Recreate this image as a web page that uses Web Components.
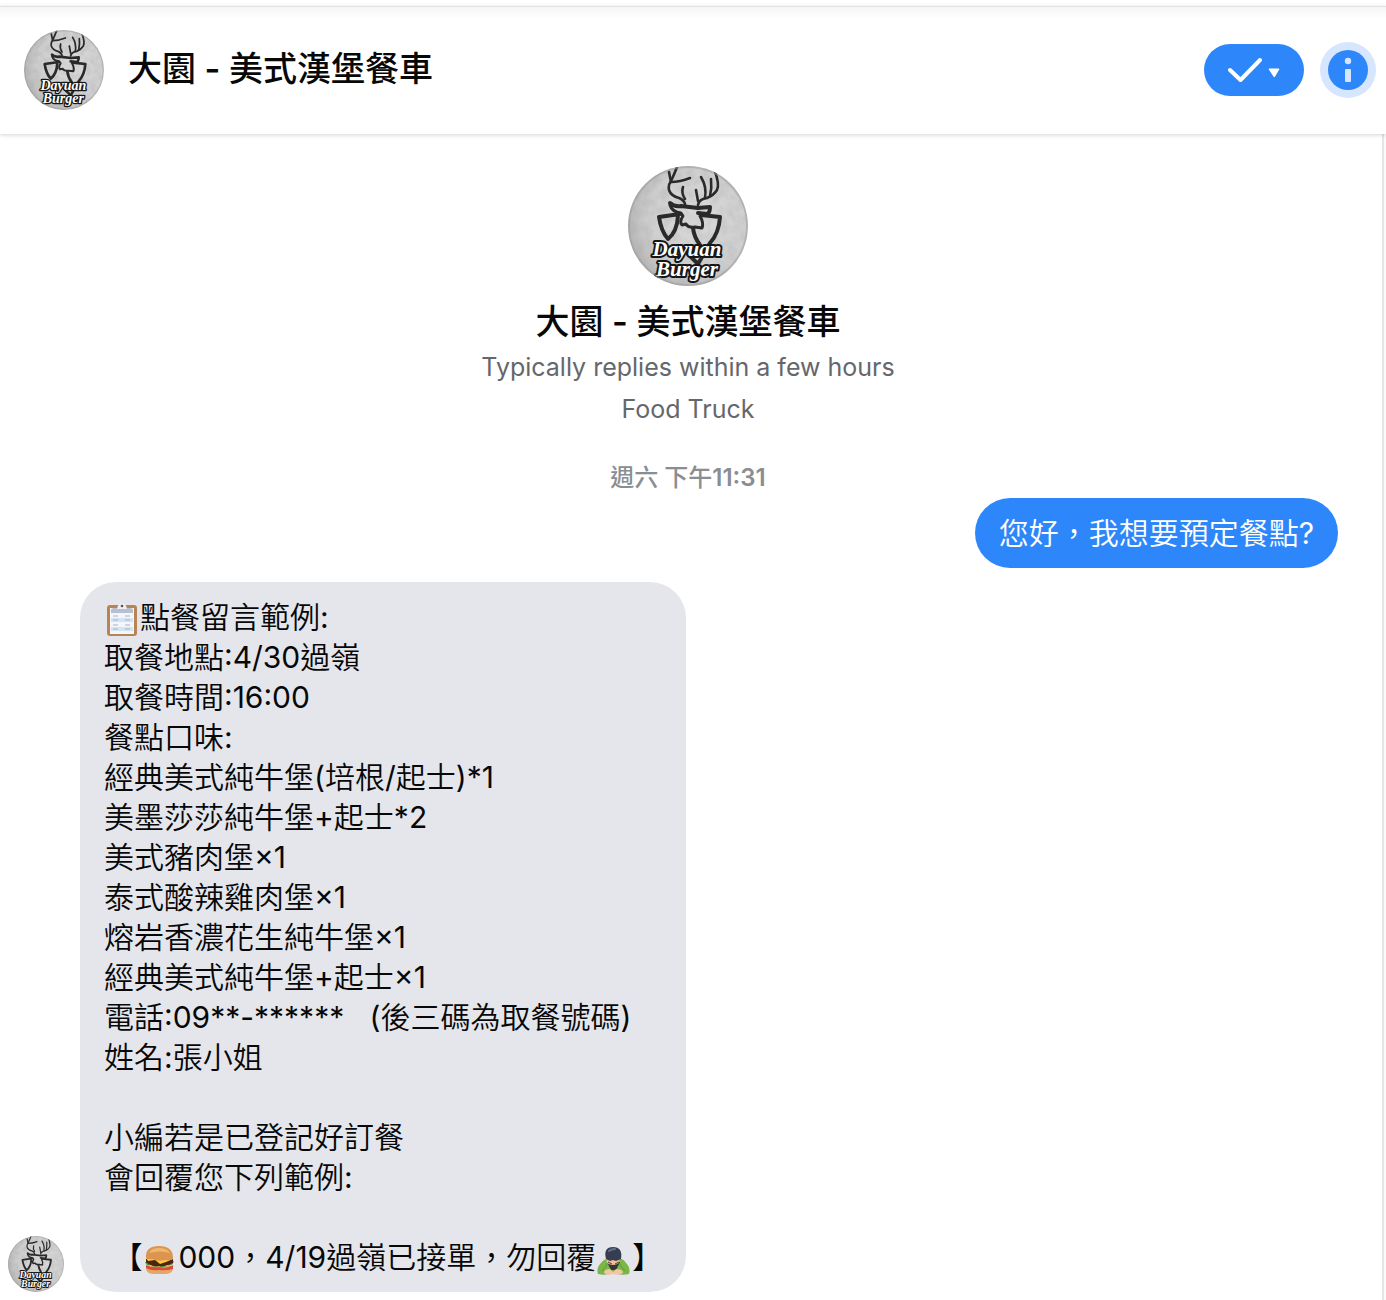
<!DOCTYPE html>
<html lang="zh-Hant">
<head>
<meta charset="utf-8">
<meta name="viewport" content="width=device-width, initial-scale=1">
<title>大園 - 美式漢堡餐車</title>
<style>
  body {
    margin: 0;
    color: #080809;
    background: #fff;
    font-family: Inter, "Noto Sans CJK TC", sans-serif;
  }
</style>
</head>
<body>
<chat-page>
  <chat-header slot="header" name="大園 - 美式漢堡餐車"></chat-header>
  <page-intro name="大園 - 美式漢堡餐車" reply="Typically replies within a few hours" category="Food Truck"></page-intro>
  <chat-time>週六 下午11:31</chat-time>
  <chat-message from="me">您好，我想要預定餐點?</chat-message>
  <chat-message from="page"><emoji-icon name="clipboard"></emoji-icon>點餐留言範例:
取餐地點:4/30過嶺
取餐時間:16:00
餐點口味:
經典美式純牛堡(培根/起士)*1
美墨莎莎純牛堡+起士*2
美式豬肉堡×1
泰式酸辣雞肉堡×1
熔岩香濃花生純牛堡×1
經典美式純牛堡+起士×1
電話:09**-******   (後三碼為取餐號碼)
姓名:張小姐

小編若是已登記好訂餐
會回覆您下列範例:

 【<emoji-icon name="burger"></emoji-icon>000，4/19過嶺已接單，勿回覆<emoji-icon name="bow"></emoji-icon>】</chat-message>
</chat-page>

<script>
class BurgerLogo extends HTMLElement {
  constructor() {
    super()
    const shadow = this.attachShadow({mode: 'open'})
    shadow.innerHTML = `
      <style>
        :host {
          display: block;
          flex: none;
          width: var(--logo-size, 80px);
          height: var(--logo-size, 80px);
        }
        svg {
          display: block;
          width: 100%;
          height: 100%;
          border-radius: 50%;
        }
        text {
          font: italic bold 21px "Liberation Serif", serif;
          fill: #fff;
          stroke: #161616;
          stroke-width: 4px;
          stroke-linejoin: round;
          paint-order: stroke;
          text-anchor: middle;
        }
      </style>
      <svg viewBox="0 0 120 120" role="img" aria-label="Dayuan Burger">
        <defs>
          <radialGradient id="paper" cx="60%" cy="45%" r="62%">
            <stop offset="0" stop-color="#dadada"/>
            <stop offset=".7" stop-color="#cecece"/>
            <stop offset="1" stop-color="#b4b4b4"/>
          </radialGradient>
          <filter id="grain" x="0" y="0" width="100%" height="100%">
            <feTurbulence type="fractalNoise" baseFrequency=".12" numOctaves="3" seed="4"/>
            <feColorMatrix values="0 0 0 0 .35  0 0 0 0 .35  0 0 0 0 .35  1 0 0 0 -.35"/>
          </filter>
        </defs>
        <rect width="120" height="120" fill="url(#paper)"/>
        <rect width="120" height="120" filter="url(#grain)" opacity=".5"/>
        <g fill="none" stroke="#2a2a2a" stroke-linecap="round" stroke-linejoin="round">
          <g stroke-width="2.600">
            <path d="M49 1Q46 9 43 15Q40 19 41 24Q43 30 51 32Q56 34 57 38"/>
            <path d="M41 6L43 16Q52 16 62 12"/>
            <path d="M55 21Q53 27 57 33"/>
            <path d="M86 3Q92 18 89 24Q86 29 79 32Q71 33 70 39"/>
            <path d="M73 11Q79 21 77 32M83 13Q84 22 82 30M68 24L70 35"/>
          </g>
          <path stroke-width="4" d="M42 37Q46 41 53 40L70 42L82 41Q82 47 79 48L70 47"/>
          <path stroke-width="3" d="M42 39Q44 46 53 47L55 50Q51 56 54 59L58 58Q60 62 67 61L74 62Q76 57 72 50"/>
          <path stroke-width="4" d="M52 48L31 51Q33 65 40 73Q49 66 50 50M73 49L92 51Q91 67 82 77L70 98L58 86M65 62Q66 71 72 79"/>
        </g>
        <text x="59" y="90">Dayuan</text>
        <text x="59" y="110">Burger</text>
        <circle cx="60" cy="60" r="59" fill="none" stroke="#999" stroke-opacity=".5" stroke-width="2"/>
      </svg>
    `
  }
}

class ChatHeader extends HTMLElement {
  constructor() {
    super()
    const shadow = this.attachShadow({mode: 'open'})
    shadow.innerHTML = `
      <style>
        :host {
          display: block;
          padding-top: 6px;
        }
        header {
          display: flex;
          align-items: center;
          box-sizing: border-box;
          height: 128px;
          padding: 0 10px 0 24px;
          border-top: 1px solid #e2e2e2;
          border-bottom: 1px solid #fff;
          background: linear-gradient(#f5f5f5, #fff 12px);
          box-shadow: 0 1px 4px 0 rgba(0,0,0,0.18);
        }
        h1 {
          flex: 1;
          margin: 0 24px;
          padding-bottom: 2px;
          font-size: 34px;
          font-weight: 600;
          line-height: 44px;
          font-family: Inter, "Noto Sans CJK TC Medium", "Noto Sans CJK TC", sans-serif;
          font-synthesis: none;
        }
        button {
          display: flex;
          align-items: center;
          justify-content: center;
          padding: 0;
          border: 0;
          color: #fff;
          background: #2e86fb;
          cursor: pointer;
        }
        .done {
          width: 100px;
          height: 52px;
          border-radius: 26px;
        }
        .info {
          width: 56px;
          height: 56px;
          margin-left: 16px;
          border-radius: 50%;
          background: #d6e6fe;
        }
      </style>
      <header>
        <burger-logo></burger-logo>
        <h1>${this.getAttribute('name')}</h1>
        <button class="done" type="button" aria-label="Mark as done">
          <svg width="100" height="52" viewBox="0 0 100 52">
            <path d="M26 26L36.500 36L56 16" fill="none" stroke="#fff" stroke-width="4" stroke-linecap="round" stroke-linejoin="round"/>
            <path d="M65 25H75L70.300 33Z" fill="#fff" stroke="#fff" stroke-linejoin="round"/>
          </svg>
        </button>
        <button class="info" type="button" aria-label="Page information">
          <svg width="40" height="40" viewBox="0 0 40 40">
            <circle cx="20" cy="20" r="20" fill="#2e86fb"/>
            <circle cx="20" cy="11" r="3.200" fill="#d6e6fe"/>
            <rect x="17" y="19" width="6" height="13" rx="1" fill="#d6e6fe"/>
          </svg>
        </button>
      </header>
    `
  }
}

class PageIntro extends HTMLElement {
  constructor() {
    super()
    const shadow = this.attachShadow({mode: 'open'})
    shadow.innerHTML = `
      <style>
        :host {
          display: flex;
          flex-direction: column;
          align-items: center;
          text-align: center;
          --logo-size: 120px;
        }
        h2 {
          margin: 14px 0 2px;
          font-size: 34px;
          font-weight: 600;
          line-height: 44px;
          font-family: Inter, "Noto Sans CJK TC Medium", "Noto Sans CJK TC", sans-serif;
          font-synthesis: none;
        }
        p {
          margin: 0;
          color: #65676b;
          font-size: 25px;
          line-height: 42px;
        }
      </style>
      <burger-logo></burger-logo>
      <h2>${this.getAttribute('name')}</h2>
      <p>${this.getAttribute('reply')}</p>
      <p>${this.getAttribute('category')}</p>
    `
  }
}

class ChatTime extends HTMLElement {
  constructor() {
    super()
    const shadow = this.attachShadow({mode: 'open'})
    shadow.innerHTML = `
      <style>
        :host {
          display: block;
          padding: 32px 0 4px;
          color: #8a8d91;
          font-size: 24px;
          font-weight: 600;
          line-height: 32px;
          text-align: center;
          font-family: Inter, "Noto Sans CJK TC Medium", "Noto Sans CJK TC", sans-serif;
          font-synthesis: none;
        }
      </style>
      <slot></slot>
    `
  }
}

class ChatMessage extends HTMLElement {
  constructor() {
    super()
    const mine = this.getAttribute('from') === 'me'
    const shadow = this.attachShadow({mode: 'open'})
    shadow.innerHTML = `
      <style>
        :host {
          display: flex;
          align-items: flex-end;
          gap: 16px;
          margin-bottom: 14px;
          padding: 0 38px 0 8px;
          font-size: 30px;
          font-family: Inter, "Noto Sans CJK TC DemiLight", "Noto Sans CJK TC", sans-serif;
          line-height: 40px;
          --logo-size: 56px;
        }
        :host([from="me"]) {
          justify-content: flex-end;
        }
        .bubble {
          padding: 15px 24px;
          border-radius: 36px;
          background: #e4e6eb;
          white-space: pre-wrap;
        }
        :host([from="me"]) .bubble {
          color: #fff;
          background: #2e86fb;
        }
      </style>
      ${mine ? '' : '<burger-logo></burger-logo>'}
      <div class="bubble"><slot></slot></div>
    `
  }
}

const emojis = {
  clipboard: `
    <rect x="3" y="3" width="30" height="31" rx="3" fill="#b98453"/>
    <path d="M6 6H30V32H6Z" fill="#f3f6fa"/>
    <path d="M7 16H29V20H7ZM7 25H29V29H7Z" fill="#d3e5f5"/>
    <path d="M9 14H14M21 14H26M9 18H14M21 18H26M9 23H14M21 23H26M9 27H14M21 27H26" stroke="#a9b4c2"/>
    <path d="M7 11V8Q7 6 10 6H26Q29 6 29 8V11Z" fill="#b8bfcd"/>
    <path d="M13 7Q14 1 18 1Q22 1 23 7Z" fill="#eceef3"/>
    <circle cx="18" cy="4" r="1.300" fill="#555"/>`,
  burger: `
    <path d="M4 24H31V27Q30 32 23 32H12Q5 32 4 27Z" fill="#e3a868"/>
    <path d="M4 23Q10 26 17 25Q25 27 31 23V27Q24 29 17 28Q9 29 4 26Z" fill="#d94b3c"/>
    <path d="M3 20Q5 25 9 23Q13 26 17 24Q21 27 25 23Q30 25 32 19Z" fill="#4c9a2a"/>
    <path d="M4 17H31V21Q24 25 17 24Q9 25 4 20Z" fill="#4d2513"/>
    <path d="M4 16Q17 15 31 17L24 20L18 22L13 18L6 19Z" fill="#ffc83a"/>
    <path d="M4 16Q3 4 17 4Q31 4 31 16Q30 19 24 18Q17 20 10 17Q5 18 4 16Z" fill="#dc9550"/>
    <path d="M7 11Q9 6 17 6Q25 6 28 11Q19 8 7 11Z" fill="#efb66d"/>`,
  bow: `
    <path d="M2 32Q0 26 5 21Q9 16 14 16H21Q27 16 30 21Q35 26 33 32Q26 34 17 31Q9 34 2 32Z" fill="#7ab648"/>
    <path d="M6 29Q11 24 12 20M29 29Q24 24 23 20" stroke="#5d9a37" fill="none"/>
    <path d="M11 20L24 20L20 28H15Z" fill="#35363d"/>
    <path d="M10 15H24L23 21Q17 25 11 21Z" fill="#f1bf94"/>
    <path d="M10 17Q7 5 17 5Q27 5 25 17L20 19L17 18L14 19Z" fill="#343d52"/>
    <path d="M13 9Q15 7 19 7" stroke="#66708a" stroke-width="2" fill="none" stroke-linecap="round"/>
    <path d="M12 20L16 22M23 20L19 22" stroke="#563b2e"/>
    <path d="M8 31Q8 27 14 27L17 30L20 27Q27 27 27 31Q22 34 17 32Q12 34 8 31Z" fill="#f3c5a0"/>`
}

class EmojiIcon extends HTMLElement {
  constructor() {
    super()
    const shadow = this.attachShadow({mode: 'open'})
    shadow.innerHTML = `
      <style>
        :host {
          display: inline-block;
          width: 36px;
          height: 34px;
          line-height: 0;
          white-space: normal;
          vertical-align: -8px;
        }
        svg {
          display: block;
        }
      </style>
      <svg width="36" height="34" viewBox="0 0 36 34" aria-hidden="true">${emojis[this.getAttribute('name')]}</svg>
    `
  }
}

class ChatPage extends HTMLElement {
  constructor() {
    super()
    const shadow = this.attachShadow({mode: 'open'})
    shadow.innerHTML = `
      <style>
        :host {
          display: flex;
          flex-direction: column;
          min-height: 100vh;
        }
        ::slotted(chat-header) {
          position: relative;
        }
        .body {
          display: flex;
          flex: 1;
        }
        main {
          flex: 1;
          min-width: 0;
          box-sizing: border-box;
          padding: 32px 6px 0 0;
        }
        .edge {
          width: 2px;
          border-left: 2px solid #e5e5e5;
          background: #fafafa;
        }
        ::slotted(chat-message:last-child) {
          margin-bottom: 8px;
        }
      </style>
      <slot name="header"></slot>
      <div class="body">
        <main><slot></slot></main>
        <div class="edge"></div>
      </div>
    `
  }
}

window.customElements.define('burger-logo', BurgerLogo)
window.customElements.define('chat-header', ChatHeader)
window.customElements.define('page-intro', PageIntro)
window.customElements.define('chat-time', ChatTime)
window.customElements.define('chat-message', ChatMessage)
window.customElements.define('emoji-icon', EmojiIcon)
window.customElements.define('chat-page', ChatPage)
</script>
</body>
</html>
